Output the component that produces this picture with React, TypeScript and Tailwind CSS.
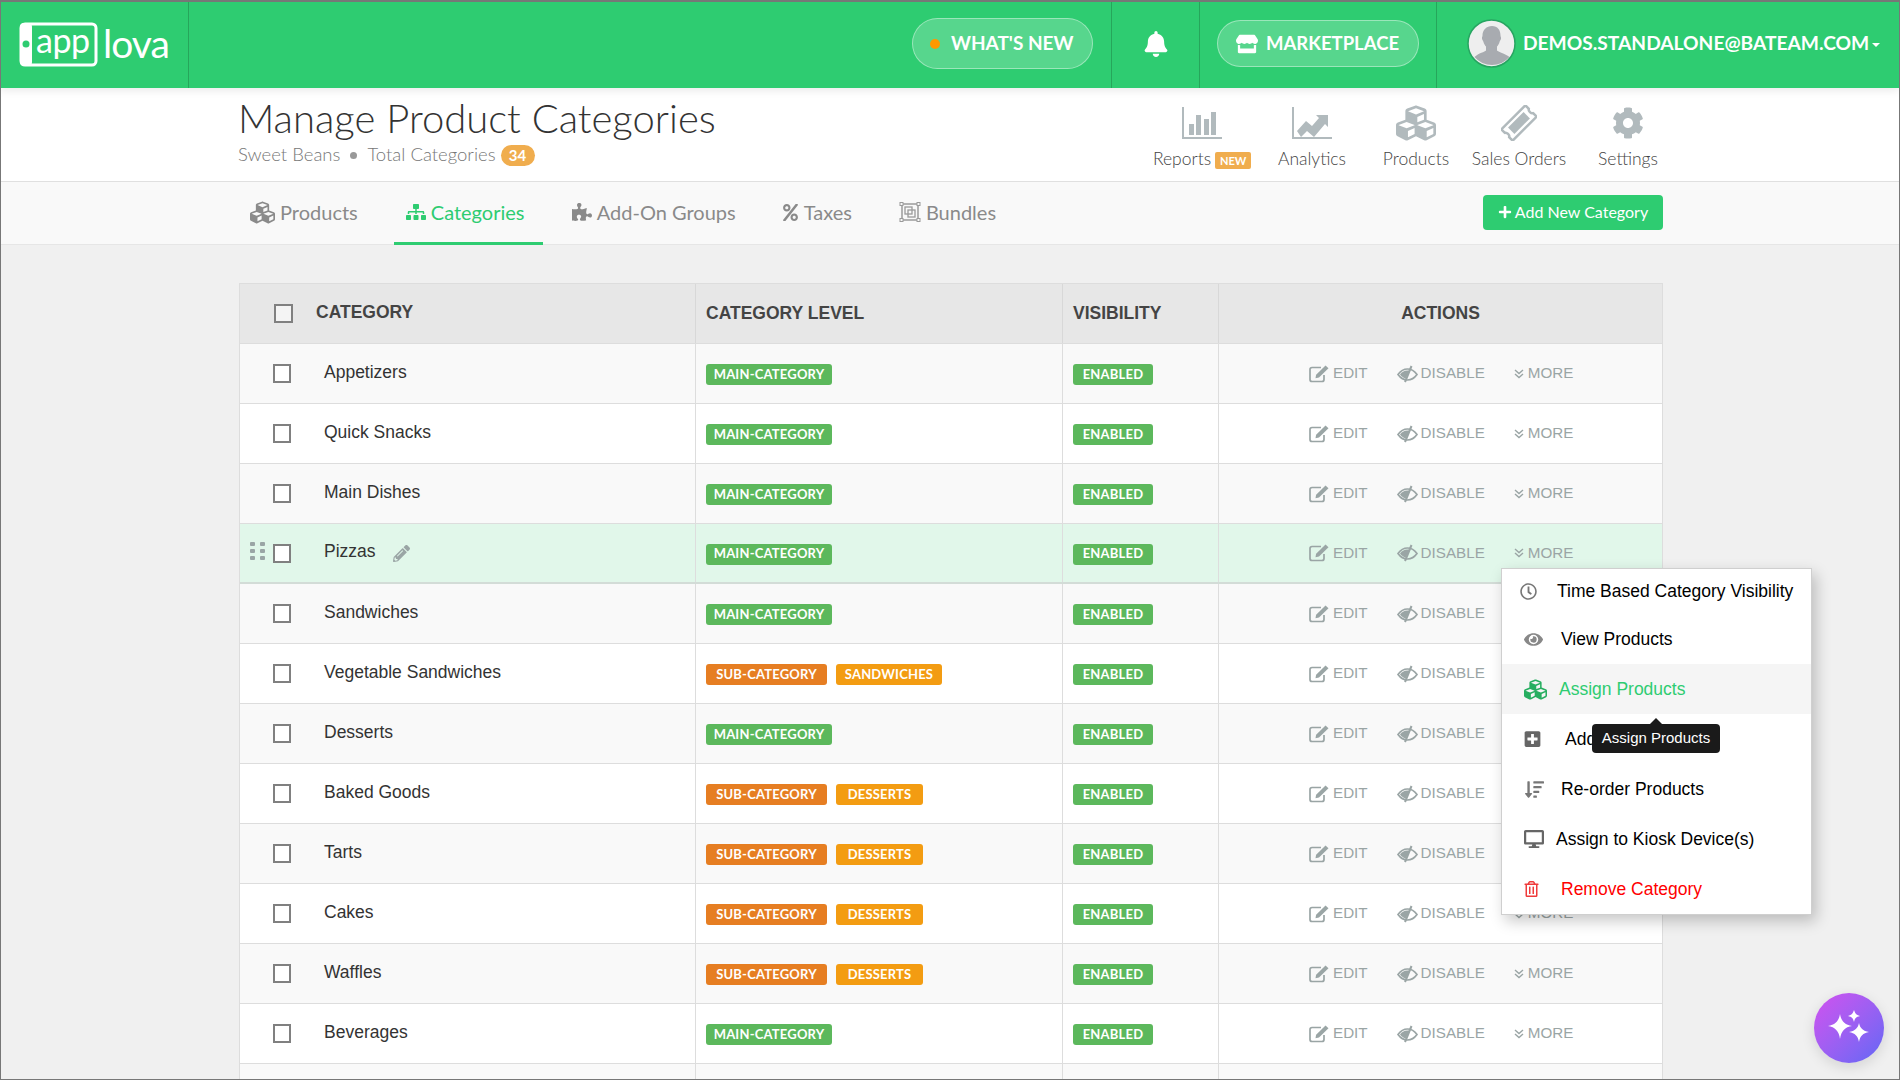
import { ReactNode } from "react";
import {
  FaBell,
  FaCog,
  FaCubes,
  FaDesktop,
  FaEye,
  FaPercent,
  FaPlus,
  FaPlusSquare,
  FaPencilAlt,
  FaPuzzlePiece,
  FaRegClock,
  FaRegTrashAlt,
  FaSitemap,
  FaSortAmountDown,
  FaStore,
} from "react-icons/fa";

type Row = { name: string; parent?: string };

const rows: Row[] = [
  { name: "Appetizers" },
  { name: "Quick Snacks" },
  { name: "Main Dishes" },
  { name: "Pizzas" },
  { name: "Sandwiches" },
  { name: "Vegetable Sandwiches", parent: "SANDWICHES" },
  { name: "Desserts" },
  { name: "Baked Goods", parent: "DESSERTS" },
  { name: "Tarts", parent: "DESSERTS" },
  { name: "Cakes", parent: "DESSERTS" },
  { name: "Waffles", parent: "DESSERTS" },
  { name: "Beverages" },
  { name: "" },
];

function Logo() {
  return (
    <svg width="152" height="46" viewBox="0 0 152 46" className="ml-[19px]">
      <rect x="2" y="2" width="75" height="41" rx="4" fill="none" stroke="#fff" strokeWidth="3" />
      <rect x="1" y="1" width="12" height="43" rx="4" fill="#fff" />
      <circle cx="7" cy="22" r="3.5" fill="#2ecc71" />
      <text x="17" y="31" fill="#fff" fontFamily="Lato" fontSize="34" fontWeight="400" letterSpacing="-0.5">
        app
      </text>
      <text x="84" y="36" fill="#fff" fontFamily="Lato" fontSize="39" fontWeight="400" letterSpacing="-1">
        lova
      </text>
    </svg>
  );
}

function Avatar() {
  return (
    <svg width="49" height="49" viewBox="0 0 49 49">
      <circle cx="24.5" cy="24.5" r="23.5" fill="#eeeeee" stroke="#27a561" strokeWidth="1.5" />
      <path
        d="M25 7c5.500 0 8.500 4 8.500 9.500 0 1.500.7 1.500.5 3-.2 1.500-1 2-1.300 3-.7 2.500-1.700 4-2.700 5v4c1 1.300 8 3 12.500 6.500a23 23 0 0 1-35 0C11.500 34 18 33 19 31.500v-4c-1-1-2-2.500-2.700-5-.3-1-1.100-1.500-1.300-3-.2-1.500.5-1.500.5-3C15.500 11 19.500 7 25 7z"
        fill="#a8abb0"
      />
    </svg>
  );
}

function ReportsIcon() {
  return (
    <svg width="42" height="34" viewBox="0 0 42 34" fill="#b1babd">
      <path d="M1 1h2v30h38v2H1z" />
      <rect x="8" y="18" width="5" height="11" />
      <rect x="15" y="9" width="5" height="20" />
      <rect x="23" y="13" width="5" height="16" />
      <rect x="30" y="6" width="5" height="23" />
    </svg>
  );
}

function AnalyticsIcon() {
  return (
    <svg width="42" height="34" viewBox="0 0 42 34" fill="#b1babd">
      <path d="M1 1h2v30h38v2H1z" />
      <path d="M6 25l9-10 6 5 7-8-3-3h12v12l-3-3-11 13-7-6-6 6z" />
    </svg>
  );
}

function TicketIcon() {
  return (
    <svg width="36" height="36" viewBox="0 0 36 36">
      <g transform="rotate(-45 18 18)">
        <path
          d="M1 10h34v5c-2 .5-2 5.500 0 6v5H1v-5c2-.5 2-5.500 0-6z"
          fill="none"
          stroke="#b1babd"
          strokeWidth="2.500"
          strokeLinejoin="round"
        />
        <rect x="7" y="13.500" width="22" height="9" fill="#b1babd" />
      </g>
    </svg>
  );
}

function BundleIcon() {
  return (
    <svg width="22" height="20" viewBox="0 0 22 20" fill="none" stroke="#9a9a9a">
      <rect x="3" y="2" width="16" height="16" strokeWidth="1.500" />
      <rect x="1" y="0.500" width="3" height="3" fill="#f9f9f9" />
      <rect x="18" y="0.500" width="3" height="3" fill="#f9f9f9" />
      <rect x="1" y="16.500" width="3" height="3" fill="#f9f9f9" />
      <rect x="18" y="16.500" width="3" height="3" fill="#f9f9f9" />
      <rect x="6" y="5" width="7" height="7" strokeWidth="1.300" />
      <rect x="9" y="8" width="7" height="7" strokeWidth="1.300" />
    </svg>
  );
}

function EditIcon() {
  return (
    <svg width="20" height="18" viewBox="0 0 20 18" fill="none">
      <path
        d="M15 10v4.500a2 2 0 0 1-2 2H3a2 2 0 0 1-2-2v-10a2 2 0 0 1 2-2h9"
        stroke="#9aa5a5"
        strokeWidth="1.700"
      />
      <path d="M16.500 0.500l3 2.800L10 12.500l-3.500.7.600-3.500z" fill="#9aa5a5" />
    </svg>
  );
}

function EyeOffIcon() {
  return (
    <svg width="21" height="18" viewBox="0 0 21 18">
      <path
        d="M1 9.500c2.500-3.500 5.500-5.500 9.500-5.500s7 2 9.500 5.500c-2.500 3.500-5.500 5.500-9.500 5.500s-7-2-9.500-5.500z"
        fill="none"
        stroke="#9aa5a5"
        strokeWidth="1.700"
      />
      <path d="M3 9.500c1.800-2.500 4-3.800 7-4 1.200 0 3 .3 3 .3L8.500 13.500C6.500 13 4.500 11.500 3 9.500z" fill="#9aa5a5" />
      <path d="M14.500 1L8 17" stroke="#9aa5a5" strokeWidth="2" />
    </svg>
  );
}

function ChevronsIcon() {
  return (
    <svg width="10" height="10" viewBox="0 0 10 10" fill="none" stroke="#9aa5a5" strokeWidth="1.400">
      <path d="M1 1l4 3.500L9 1" />
      <path d="M1 5l4 3.500L9 5" />
    </svg>
  );
}

function Sparkles() {
  return (
    <svg width="44" height="36" viewBox="0 0 44 36" fill="#fff">
      <path d="M13 4c1 7 5 11 12 12-7 1-11 5-12 13-1-8-5-12-12-13 7-1 11-5 12-12z" />
      <path d="M32 13c1 5 4 8 10 9-6 1-9 4-10 10-1-6-4-9-10-10 6-1 9-4 10-9z" />
      <path d="M27 0c1 3 2 5 6 6-4 1-5 2-6 6-1-4-2-5-6-6 4-1 5-3 6-6z" />
    </svg>
  );
}

function NavItem({ icon, label, width, badge }: { icon: ReactNode; label: string; width: string; badge?: boolean }) {
  return (
    <div className={`${width} flex flex-col items-center`}>
      <div className="flex h-[38px] items-center justify-center text-[#b1babd]">{icon}</div>
      <div className="mt-[5px] flex h-[24px] items-center text-[17.5px] leading-none font-light text-[#444]">
        {label}
        {badge && (
          <span className="mt-[3px] ml-[4px] flex h-[17px] w-[36px] items-center justify-center rounded-[2px] bg-[#f0ad4e] text-[11px] font-bold text-white">
            NEW
          </span>
        )}
      </div>
    </div>
  );
}

function Tab({ icon, label, className, active }: { icon: ReactNode; label: string; className: string; active?: boolean }) {
  return (
    <div
      className={`flex h-[63px] items-center gap-[5px] border-b-[3px] pt-[1px] text-[20px] ${className} ${
        active ? "border-[#2ecc71] text-[#2ecc71]" : "border-transparent text-[#8a8a8a]"
      }`}
    >
      {icon}
      {label}
    </div>
  );
}

function Label({ text, className }: { text: string; className: string }) {
  return (
    <span
      className={`mt-[2px] flex h-[21px] items-center justify-center rounded-[3px] font-['Lato',sans-serif] text-[13px] font-bold tracking-[0.2px] text-white ${className}`}
    >
      {text}
    </span>
  );
}

function TableRow({ row, index }: { row: Row; index: number }) {
  const hot = row.name === "Pizzas";
  const bg = hot ? "bg-[#e1f7ea]" : index % 2 === 0 ? "bg-[#f9f9f9]" : "bg-white";
  return (
    <div
      className={`grid h-[60px] grid-cols-[456px_367px_156px_1fr] border-b ${bg} ${
        hot ? "border-b-2 border-[#d3dcd7]" : "border-[#dddddd]"
      }`}
    >
      <div className="relative flex items-center border-r border-[#dddddd] pl-[33px]">
        {hot && (
          <div className="absolute top-[18px] left-[10px] grid grid-cols-2 gap-x-[5px] gap-y-[3px]">
            {[0, 1, 2, 3, 4, 5].map((i) => (
              <span key={i} className="h-[4px] w-[5px] rounded-[1px] bg-[#9aa5a5]" />
            ))}
          </div>
        )}
        {row.name && <span className="h-[19px] w-[18px] border-2 border-[#808080] bg-white" />}
        <span className="mb-[3px] ml-[33px] text-[17.5px] text-[#333]">{row.name}</span>
        {hot && <FaPencilAlt className="ml-[17px] text-[17px] text-[#9aa5a5]" />}
      </div>
      <div className="flex items-center gap-[9px] border-r border-[#dddddd] pl-[10px]">
        {row.name &&
          (row.parent ? (
            <>
              <Label text="SUB-CATEGORY" className="w-[121px] bg-[#e67e22]" />
              <Label
                text={row.parent}
                className={`bg-[#f39c12] ${row.parent === "SANDWICHES" ? "w-[106px]" : "w-[87px]"}`}
              />
            </>
          ) : (
            <Label text="MAIN-CATEGORY" className="w-[126px] bg-[#5cb85c]" />
          ))}
      </div>
      <div className="flex items-center border-r border-[#dddddd] pl-[10px]">
        {row.name && <Label text="ENABLED" className="w-[80px] bg-[#5cb85c]" />}
      </div>
      {row.name ? (
        <div className="flex items-center pl-[90px] text-[15.2px] text-[#9aa5a5]">
          <EditIcon />
          <span className="ml-[4px]">EDIT</span>
          <span className="ml-[29px] flex">
            <EyeOffIcon />
          </span>
          <span className="ml-[3px]">DISABLE</span>
          <span className="ml-[29px] flex">
            <ChevronsIcon />
          </span>
          <span className="ml-[4px]">MORE</span>
        </div>
      ) : (
        <div />
      )}
    </div>
  );
}

function MoreMenu() {
  return (
    <div className="absolute top-[567px] left-[1500px] w-[311px] border border-[#cfcfcf] bg-white text-[17.5px] text-black shadow-[4px_6px_14px_rgba(0,0,0,0.22)]">
      <div className="flex h-[45px] items-center pl-[18px]">
        <FaRegClock className="w-[17px] text-[17px] text-[#777]" />
        <span className="ml-[20px]">Time Based Category Visibility</span>
      </div>
      <div className="flex h-[50px] items-center pl-[22px]">
        <FaEye className="w-[19px] text-[19px] text-[#888]" />
        <span className="ml-[18px]">View Products</span>
      </div>
      <div className="flex h-[50px] items-center bg-[#f5f5f5] pl-[22px] text-[#2ecc71]">
        <FaCubes className="w-[23px] text-[23px] text-[#27ae60]" />
        <span className="ml-[12px]">Assign Products</span>
      </div>
      <div className="flex h-[50px] items-center pl-[22px]">
        <FaPlusSquare className="w-[17px] text-[18px] text-[#666]" />
        <span className="ml-[24px]">Add Sub-Category</span>
      </div>
      <div className="flex h-[50px] items-center pl-[23px]">
        <FaSortAmountDown className="w-[19px] text-[19px] text-[#777]" />
        <span className="ml-[17px]">Re-order Products</span>
      </div>
      <div className="flex h-[50px] items-center pl-[22px]">
        <FaDesktop className="w-[20px] text-[20px] text-[#666]" />
        <span className="ml-[12px]">Assign to Kiosk Device(s)</span>
      </div>
      <div className="flex h-[50px] items-center pl-[22px] text-[#ff0000]">
        <FaRegTrashAlt className="w-[15px] text-[16px] text-[#ef3b3b]" />
        <span className="ml-[22px]">Remove Category</span>
      </div>
    </div>
  );
}

function Tooltip() {
  return (
    <div className="absolute top-[723px] left-[1591px] flex h-[29px] w-[128px] items-center justify-center rounded-[4px] bg-[#1a1a1a] text-[15px] text-white">
      <span className="absolute -top-[6px] left-1/2 h-0 w-0 -translate-x-1/2 border-x-[6px] border-b-[6px] border-x-transparent border-b-[#1a1a1a]" />
      Assign Products
    </div>
  );
}

export default function App() {
  return (
    <div className="relative h-[1080px] w-[1900px] overflow-hidden border border-[#777] bg-[#f0f0f0] font-['Lato',sans-serif]">
      {/* top bar */}
      <header className="relative z-10 -mt-px -ml-px flex h-[88px] items-center border-t-2 border-[#777] bg-[#2ecc71] text-[18px] font-bold text-white shadow-[0_3px_8px_rgba(0,0,0,0.08)]">
        <div className="flex h-full w-[189px] items-center border-r border-[#26a65b]">
          <Logo />
        </div>
        <div className="mb-[3px] ml-[723px] flex h-[51px] w-[181px] items-center rounded-full border border-white/40 bg-white/20 pl-[17px]">
          <span className="h-[10px] w-[10px] rounded-full bg-[#ff9800]" />
          <span className="ml-[11px] text-[19px]">WHAT'S NEW</span>
        </div>
        <div className="ml-[18px] flex h-full w-[89px] items-center justify-center border-x border-[#26a65b] pb-[3px]">
          <FaBell className="text-[26px]" />
        </div>
        <div className="mb-[3px] ml-[17px] flex h-[47px] w-[202px] items-center rounded-full border border-white/40 bg-white/20 pl-[18px]">
          <FaStore className="text-[22px]" />
          <span className="ml-[8px] text-[18.5px]">MARKETPLACE</span>
        </div>
        <div className="ml-[17px] flex h-full flex-1 items-center border-l border-[#26a65b] pb-[3px] pl-[30px]">
          <Avatar />
          <span className="ml-[7px] text-[19.2px]">DEMOS.STANDALONE@BATEAM.COM</span>
          <span className="mt-[3px] ml-[3px] h-0 w-0 border-x-[4.5px] border-t-[4px] border-x-transparent border-t-white" />
        </div>
      </header>

      {/* page title */}
      <div className="flex h-[94px] border-b border-[#e0e0e0] bg-white pr-[236px] pl-[237px]">
        <div className="flex-1">
          <h1 className="mt-[5px] text-[40px] leading-[50px] font-light text-[#333]">Manage Product Categories</h1>
          <div className="flex h-[24px] items-center text-[18.5px] font-light text-[#777]">
            Sweet Beans
            <span className="mx-[10px] h-[7px] w-[7px] rounded-full bg-[#999]" />
            Total Categories
            <span className="ml-[5px] flex h-[21px] w-[34px] items-center justify-center rounded-full bg-[#f0ad4e] text-[15px] font-bold text-white">
              34
            </span>
          </div>
        </div>
        <div className="-mr-[18px] flex pt-[16px]">
          <NavItem width="w-[106px]" icon={<ReportsIcon />} label="Reports" badge />
          <NavItem width="w-[114px]" icon={<AnalyticsIcon />} label="Analytics" />
          <NavItem width="w-[94px]" icon={<FaCubes className="text-[40px]" />} label="Products" />
          <NavItem width="w-[112px]" icon={<TicketIcon />} label="Sales Orders" />
          <NavItem width="w-[106px]" icon={<FaCog className="text-[32px]" />} label="Settings" />
        </div>
      </div>

      {/* tabs */}
      <div className="flex h-[63px] items-center border-b border-[#e6e6e6] bg-[#f9f9f9] pr-[236px] pl-[249px]">
        <Tab icon={<FaCubes className="text-[25px]" />} label="Products" className="pr-[13px]" />
        <Tab
          icon={<FaSitemap className="text-[20px]" />}
          label="Categories"
          className="ml-[23px] w-[149px] pl-[12px]"
          active
        />
        <Tab icon={<FaPuzzlePiece className="text-[20px]" />} label="Add-On Groups" className="ml-[29px]" />
        <Tab icon={<FaPercent className="text-[17px]" />} label="Taxes" className="ml-[46px]" />
        <Tab icon={<BundleIcon />} label="Bundles" className="ml-[47px] gap-[2px]" />
        <button className="mb-[2px] ml-auto flex h-[35px] w-[180px] items-center justify-center gap-[3px] rounded-[4px] bg-[#2ecc71] text-[16px] text-white">
          <FaPlus className="text-[14px]" />
          Add New Category
        </button>
      </div>

      {/* table */}
      <div className="mt-[38px] ml-[238px] w-[1424px] border border-[#dddddd] font-['Liberation_Sans',Arial,sans-serif]">
        <div className="grid h-[60px] grid-cols-[456px_367px_156px_1fr] border-b border-[#dddddd] bg-[#e7e7e7] text-[17.5px] font-bold text-[#444]">
          <div className="flex items-center border-r border-[#d8d8d8] pl-[34px]">
            <span className="h-[19px] w-[19px] border-2 border-[#808080] bg-[#f4f4f4]" />
            <span className="mb-[3px] ml-[23px]">CATEGORY</span>
          </div>
          <div className="flex items-center border-r border-[#d8d8d8] pl-[10px]">CATEGORY LEVEL</div>
          <div className="flex items-center border-r border-[#d8d8d8] pl-[10px]">VISIBILITY</div>
          <div className="flex items-center justify-center">ACTIONS</div>
        </div>
        {rows.map((row, i) => (
          <TableRow key={i} row={row} index={i} />
        ))}
      </div>

      <div className="font-['Liberation_Sans',Arial,sans-serif]">
        <MoreMenu />
        <Tooltip />
      </div>

      {/* assistant bubble */}
      <div className="absolute top-[992px] left-[1813px] flex h-[70px] w-[70px] items-center justify-center rounded-full bg-gradient-to-br from-[#d14fef] to-[#5f66f5] shadow-[0_4px_14px_rgba(0,0,0,0.12)]">
        <Sparkles />
      </div>
    </div>
  );
}
